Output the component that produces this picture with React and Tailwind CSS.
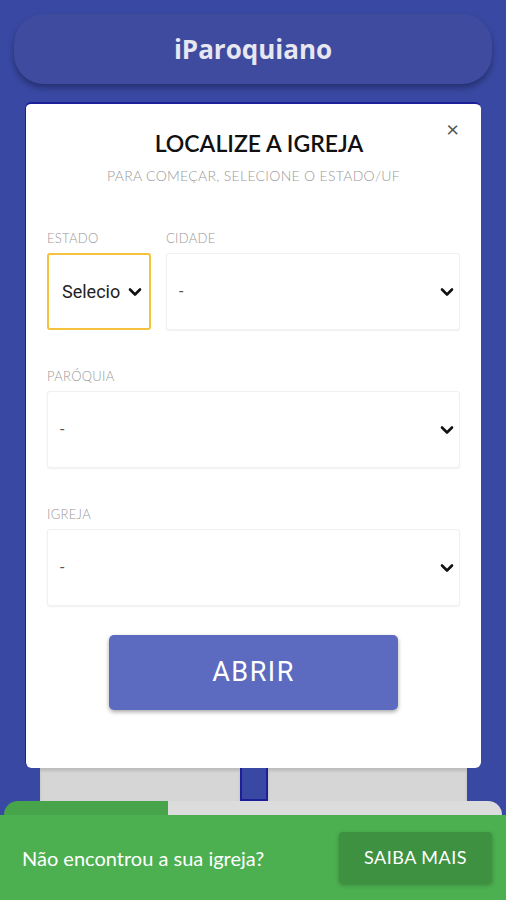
import React from 'react';

const Chevron = () => (
  <svg width="14" height="10" viewBox="0 0 14 10" className="shrink-0">
    <path d="M2 2.5 L7 7.5 L12 2.5" fill="none" stroke="#111" strokeWidth="2.6" strokeLinecap="round" strokeLinejoin="round" />
  </svg>
);

function Field({ label, value, className = '' }) {
  return (
    <div className={className}>
      <div className="text-[13px] leading-[16px] text-[#999] font-light tracking-[0.3px]">{label}</div>
      <div className="mt-[7px] h-[77px] flex items-center justify-between pl-[12px] pr-[5px] bg-white border border-[#f0f0f0] rounded-[3px] shadow-[0_1px_2px_rgba(0,0,0,0.06)]">
        <span className="text-[16px] text-[#555]" style={{ fontFamily: 'Roboto, sans-serif' }}>{value}</span>
        <Chevron />
      </div>
    </div>
  );
}

export default function App() {
  return (
    <div className="w-[506px] h-[900px] bg-[#3949a3] overflow-hidden flex flex-col" style={{ fontFamily: 'Lato, "Open Sans", sans-serif' }}>
      {/* header */}
      <div className="mx-[14px] mt-[14px] h-[70px] rounded-[30px] bg-[#3f4b9e] shadow-[0_4px_6px_rgba(0,0,20,0.35)] flex items-center justify-center">
        <span className="text-[26px] font-bold text-[#e6e7f0]" style={{ fontFamily: '"Open Sans", sans-serif' }}>iParoquiano</span>
      </div>

      {/* card */}
      <div className="relative mx-[25px] mt-[18px] h-[666px] bg-white rounded-[6px] border-t-2 border-l border-[#1c1f98] px-[21px] z-10">
        <button className="absolute right-[22px] top-[14px] text-[22px] leading-none text-[#555]">×</button>
        <h1 className="pt-[25px] pl-[11px] text-center text-[23px] leading-[28px] font-semibold text-[#111]">LOCALIZE A IGREJA</h1>
        <p className="mt-[11px] text-center text-[14px] leading-[16px] text-[#999] font-light tracking-[0.3px]">PARA COMEÇAR, SELECIONE O ESTADO/UF</p>

        <div className="mt-[46px] flex gap-[15px]">
          <div className="w-[104px]">
            <div className="text-[13px] leading-[16px] text-[#999] font-light tracking-[0.3px]">ESTADO</div>
            <div className="mt-[7px] h-[77px] flex items-center pl-[13px] pr-[6px] border-2 border-[#f5c23e] rounded-[3px]">
              <span className="w-[58px] overflow-hidden whitespace-nowrap text-[18px] text-[#222]" style={{ fontFamily: 'Roboto, sans-serif' }}>Selecione</span>
              <span className="ml-[8px]"><Chevron /></span>
            </div>
          </div>
          <Field label="CIDADE" value="-" className="flex-1" />
        </div>

        <Field label="PARÓQUIA" value="-" className="mt-[38px]" />
        <Field label="IGREJA" value="-" className="mt-[38px]" />

        <div className="mt-[29px] flex justify-center">
          <button className="w-[289px] h-[75px] rounded-[5px] bg-[#5c6bc0] shadow-[0_2px_4px_rgba(0,0,0,0.35)] text-white text-[27px] tracking-[1.5px]" style={{ fontFamily: 'Roboto, sans-serif' }}>
            ABRIR
          </button>
        </div>
      </div>

      {/* background strip behind card */}
      <div className="h-[33px] flex">
        <div className="w-[40px]" />
        <div className="w-[200px] bg-[#d6d6d6] shadow-[inset_0_3px_3px_rgba(0,0,0,0.12)]" />
        <div className="w-[28px] border-2 border-[#1c1f98] border-t-0 bg-[#3949a3]" />
        <div className="w-[199px] bg-[#d6d6d6] shadow-[inset_0_3px_3px_rgba(0,0,0,0.12)]" />
      </div>

      {/* tabs */}
      <div className="h-[14px] flex">
        <div className="ml-[4px] w-[164px] bg-[#47a44b] rounded-tl-[20px]" />
        <div className="w-[334px] bg-[#dcdcdc] rounded-tr-[24px]" />
      </div>

      {/* bottom bar */}
      <div className="flex-1 bg-[#4caf50] flex items-center justify-between pl-[22px] pr-[14px]">
        <span className="text-[20px] text-white">Não encontrou a sua igreja?</span>
        <button className="w-[153px] h-[51px] rounded-[4px] bg-[#3d9140] shadow-[0_2px_4px_rgba(0,0,0,0.25)] text-white text-[18px] tracking-[0.5px]">
          SAIBA MAIS
        </button>
      </div>
    </div>
  );
}
